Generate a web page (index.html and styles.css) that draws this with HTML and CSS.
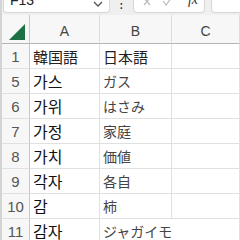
FILE: index.html
```html
<!DOCTYPE html>
<html>
<head>
<meta charset="utf-8">
<link rel="stylesheet" href="styles.css">
</head>
<body>
<div class="app">
  <div class="toolbar">
    <div class="box namebox">
      <span class="ref">F13</span>
      <svg class="chev" width="10" height="6" viewBox="0 0 10 6"><path d="M1 1 L5 5 L9 1" fill="none" stroke="#555" stroke-width="1.3"/></svg>
    </div>
    <div class="dots">⋮</div>
    <div class="box fbox">
      <svg class="ic" width="12" height="8" viewBox="0 0 12 8"><path d="M2 -2 L8 5 M8 -2 L2 5" fill="none" stroke="#bbb" stroke-width="1.2"/></svg>
      <svg class="ic" width="12" height="8" viewBox="0 0 12 8"><path d="M1 1 L4 5 L10 -3" fill="none" stroke="#bbb" stroke-width="1.2"/></svg>
      <span class="fx">fx</span>
    </div>
    <div class="box formula"></div>
  </div>
  <div class="sheet">
    <div class="corner"><svg width="16" height="16" viewBox="0 0 16 16"><path d="M16 0 L16 16 L0 16 Z" fill="#1e7145"/></svg></div>
    <div class="colh">A</div>
    <div class="colh">B</div>
    <div class="colh">C</div>

    <div class="rowh">1</div><div class="cell ja1">韓国語</div><div class="cell ja1">日本語</div><div class="cell"></div>
    <div class="rowh">5</div><div class="cell ko">가스</div><div class="cell ja">ガス</div><div class="cell"></div>
    <div class="rowh">6</div><div class="cell ko">가위</div><div class="cell ja">はさみ</div><div class="cell"></div>
    <div class="rowh">7</div><div class="cell ko">가정</div><div class="cell ja">家庭</div><div class="cell"></div>
    <div class="rowh">8</div><div class="cell ko">가치</div><div class="cell ja">価値</div><div class="cell"></div>
    <div class="rowh">9</div><div class="cell ko">각자</div><div class="cell ja">各自</div><div class="cell"></div>
    <div class="rowh">10</div><div class="cell ko">감</div><div class="cell ja">柿</div><div class="cell"></div>
    <div class="rowh">11</div><div class="cell ko">감자</div><div class="cell ja over">ジャガイモ</div><div class="cell nol"></div>
  </div>
</div>
</body>
</html>
```

FILE: styles.css
```css
html, body {
  margin: 0;
  padding: 0;
  width: 240px;
  height: 240px;
  overflow: hidden;
  background: #fff;
}
.app {
  width: 240px;
  height: 240px;
  overflow: hidden;
  border-left: 2px solid #d4d4d4;
  box-sizing: border-box;
  display: flex;
  flex-direction: column;
  font-family: "Noto Sans", "Noto Sans CJK JP", sans-serif;
}
.toolbar {
  height: 15px;
  flex: none;
  background: #efefef;
  display: flex;
  align-items: flex-end;
  padding-bottom: 2px;
  box-sizing: border-box;
  overflow: hidden;
}
.box {
  background: #fff;
  border: 1px solid #d6d6d6;
  border-top: none;
  border-radius: 0 0 4px 4px;
  height: 13px;
  box-sizing: border-box;
  display: flex;
  align-items: flex-end;
}
.namebox {
  margin-left: 1px;
  width: 107px;
  justify-content: space-between;
  padding: 0 6px 0 6px;
}
.ref {
  font-family: "Liberation Sans", sans-serif;
  font-size: 14px;
  line-height: 14px;
  color: #222;
  margin-bottom: 5px;
}
.chev { margin-bottom: 5px; }
.dots {
  width: 23px;
  text-align: center;
  font-size: 14px;
  line-height: 14px;
  color: #333;
  margin-bottom: 3px;
  font-family: "DejaVu Sans", sans-serif;
}
.fbox {
  width: 72px;
  padding: 0 6px 0 8px;
  gap: 8px;
  align-items: flex-end;
}
.ic { margin-bottom: 4px; }
.fx {
  margin-left: auto;
  font-family: "Liberation Serif", serif;
  font-style: italic;
  font-size: 14px;
  line-height: 14px;
  color: #333;
  margin-bottom: 5px;
}
.formula {
  margin-left: 6px;
  flex: 1;
  border-right: none;
  border-radius: 0 0 0 4px;
}
.sheet {
  flex: 1;
  display: grid;
  grid-template-columns: 28px 70px 72px 1fr;
  grid-template-rows: 29px repeat(8, 25px);
}
.corner {
  background: #f7f7f7;
  border-right: 1px solid #c8c8c8;
  border-bottom: 1px solid #b4b4b4;
  display: flex;
  align-items: flex-end;
  justify-content: flex-end;
  padding: 0 4px 3px 0;
}
.colh {
  background: #f7f7f7;
  border-right: 1px solid #dcdcdc;
  border-bottom: 1px solid #b4b4b4;
  display: flex;
  align-items: center;
  justify-content: center;
  font-family: "Liberation Sans", sans-serif;
  font-size: 14px;
  color: #444;
  padding-top: 3px;
}
.rowh {
  background: #f7f7f7;
  border-right: 1px solid #c8c8c8;
  border-bottom: 1px solid #e0e0e0;
  display: flex;
  align-items: center;
  justify-content: center;
  font-family: "Liberation Sans", sans-serif;
  font-size: 15px;
  color: #555;
}
.cell {
  border-right: 1px solid #e0e0e0;
  border-bottom: 1px solid #e0e0e0;
  display: flex;
  align-items: center;
  padding-left: 3px;
  white-space: nowrap;
  color: #111;
}
.ko {
  font-family: "Noto Sans CJK KR", sans-serif;
  font-size: 16px;
}
.ja {
  font-family: "Noto Sans CJK JP", sans-serif;
  font-size: 14px;
  color: #444;
}
.ja1 {
  font-family: "Noto Sans CJK JP", sans-serif;
  font-size: 15px;
  color: #222;
}
.over {
  border-right: none;
  overflow: visible;
}
.nol { border-left: none; }
```
